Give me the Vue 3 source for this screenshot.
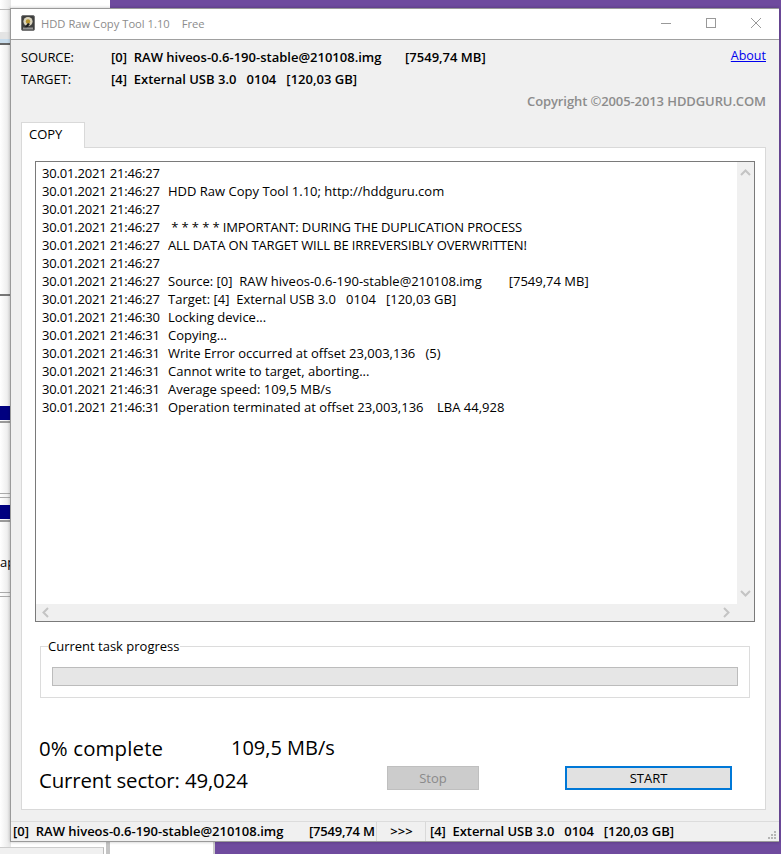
<script setup>
const t1 = '30.01.2021 21:46:27'
const t2 = '30.01.2021 21:46:30'
const t3 = '30.01.2021 21:46:31'
const log = [
  [t1, ''],
  [t1, 'HDD Raw Copy Tool 1.10; http://hddguru.com'],
  [t1, ''],
  [t1, ' * * * * * IMPORTANT: DURING THE DUPLICATION PROCESS', true],
  [t1, 'ALL DATA ON TARGET WILL BE IRREVERSIBLY OVERWRITTEN!', true],
  [t1, ''],
  [t1, 'Source: [0]  RAW hiveos-0.6-190-stable@210108.img        [7549,74 MB]'],
  [t1, 'Target: [4]  External USB 3.0   0104   [120,03 GB]'],
  [t2, 'Locking device...'],
  [t3, 'Copying...'],
  [t3, 'Write Error occurred at offset 23,003,136   (5)'],
  [t3, 'Cannot write to target, aborting...'],
  [t3, 'Average speed: 109,5 MB/s'],
  [t3, 'Operation terminated at offset 23,003,136    LBA 44,928']
]
const srcName = '[0]  RAW hiveos-0.6-190-stable@210108.img'
const srcFull = srcName + '       [7549,74 MB]'
const tgtFull = '[4]  External USB 3.0   0104   [120,03 GB]'
</script>

<template>
  <div class="desktop">
    <div class="wall-top"></div>
    <div class="wall-right"></div>
    <div class="wall-bottom"></div>
    <div class="bg-window">
      <div class="bg-line" style="top: 9px; height: 1px; background: #bbb"></div>
      <div class="bg-line" style="top: 32px; height: 7px; background: #e4e4e4"></div>
      <div class="bg-line" style="top: 39px; height: 4px; background: #c8dcec"></div>
      <div class="bg-line" style="top: 43px; height: 2px; background: #666"></div>
      <div class="bg-line" style="top: 294px; height: 2px; background: #777"></div>
      <div class="bg-line" style="top: 406px; height: 14px; background: #000080"></div>
      <div class="bg-line" style="top: 421px; height: 2px; background: #999"></div>
      <div class="bg-line" style="top: 493px; height: 1px; background: #aaa"></div>
      <div class="bg-line" style="top: 497px; height: 1px; background: #aaa"></div>
      <div class="bg-line" style="top: 505px; height: 14px; background: #000080"></div>
      <div class="bg-line" style="top: 520px; height: 2px; background: #999"></div>
      <div class="bg-line" style="top: 592px; height: 1px; background: #aaa"></div>
      <div class="bg-line" style="top: 596px; height: 1px; background: #aaa"></div>
      <span class="bg-text">ap</span>
    </div>
    <div class="bottom-left"></div>
    <div class="bottom-white"></div>

    <section class="window">
      <header class="titlebar">
        <svg class="app-icon" width="14" height="16" viewBox="0 0 14 16">
          <rect x="0.5" y="0.5" width="13" height="15" rx="1.5" fill="#3f3f3f" stroke="#777" />
          <circle cx="7" cy="6.5" r="4.6" fill="#d9d3bd" />
          <circle cx="7" cy="6.5" r="2.2" fill="#b8952f" />
          <path d="M7 8 L3 13 L5 14 L9 9 Z" fill="#1d1d1d" />
          <rect x="2" y="12.5" width="10" height="2" fill="#bdbdbd" opacity="0.7" />
        </svg>
        <span class="title">HDD Raw Copy Tool 1.10</span>
        <span class="free">Free</span>
        <div class="controls">
          <svg width="12" height="12" viewBox="0 0 12 12"><path d="M1 6.5H11" stroke="#999" fill="none" /></svg>
          <svg width="12" height="12" viewBox="0 0 12 12"><rect x="1.5" y="1.5" width="9" height="9" stroke="#999" fill="none" /></svg>
          <svg width="12" height="12" viewBox="0 0 12 12"><path d="M1 1L11 11M11 1L1 11" stroke="#999" fill="none" /></svg>
        </div>
      </header>

      <div class="body">
        <div class="info">
          <div class="info-rows">
            <div class="info-row">
              <span class="info-label">SOURCE:</span>
              <span class="info-value">{{ srcFull }}</span>
            </div>
            <div class="info-row">
              <span class="info-label">TARGET:</span>
              <span class="info-value">{{ tgtFull }}</span>
            </div>
          </div>
          <a class="about">About</a>
        </div>
        <div class="copyright">Copyright ©2005-2013 HDDGURU.COM</div>

        <div class="tabs"><div class="tab">COPY</div></div>
        <div class="tab-panel">
          <div class="log">
            <div class="log-main">
              <div class="log-lines">
                <div v-for="(row, i) in log" :key="i" class="log-row">
                  <span class="log-time">{{ row[0] }}</span>
                  <span class="log-msg" :class="{ caps: row[2] }">{{ row[1] }}</span>
                </div>
              </div>
              <div class="vscroll">
                <svg width="11" height="7" viewBox="0 0 11 7"><path d="M1 6L5.5 1.5L10 6" stroke="#c4c4c4" stroke-width="2" fill="none" /></svg>
                <svg width="11" height="7" viewBox="0 0 11 7"><path d="M1 1L5.5 5.5L10 1" stroke="#c4c4c4" stroke-width="2" fill="none" /></svg>
              </div>
            </div>
            <div class="hscroll">
              <svg width="7" height="11" viewBox="0 0 7 11"><path d="M6 1L1.5 5.5L6 10" stroke="#c4c4c4" stroke-width="2" fill="none" /></svg>
              <svg width="7" height="11" viewBox="0 0 7 11"><path d="M1 1L5.5 5.5L1 10" stroke="#c4c4c4" stroke-width="2" fill="none" /></svg>
            </div>
          </div>

          <fieldset class="group">
            <legend>Current task progress</legend>
            <div class="progress"></div>
          </fieldset>

          <div class="footer">
            <div class="stats">
              <div class="stat-row"><span class="stat-pct">0% complete</span><span class="stat-speed">109,5 MB/s</span></div>
              <div class="stat-row stat-sector">Current sector: 49,024</div>
            </div>
            <button class="btn stop" disabled>Stop</button>
            <button class="btn start">START</button>
          </div>
        </div>
      </div>

      <footer class="status">
        <span class="st st-src">{{ srcName }}</span>
        <span class="st st-size">[7549,74 M</span>
        <span class="st st-arrow">&gt;&gt;&gt;</span>
        <span class="st st-tgt">{{ tgtFull }}</span>
        <svg class="grip" width="9" height="9" viewBox="0 0 9 9" fill="#b5b5b5">
          <rect x="6" y="0" width="2" height="2" /><rect x="3" y="3" width="2" height="2" /><rect x="6" y="3" width="2" height="2" />
          <rect x="0" y="6" width="2" height="2" /><rect x="3" y="6" width="2" height="2" /><rect x="6" y="6" width="2" height="2" />
        </svg>
      </footer>
    </section>
  </div>
</template>

<style scoped>
.desktop {
  position: relative;
  width: 781px;
  height: 854px;
  overflow: hidden;
  background: #fff;
  font-family: "Open Sans", "Noto Sans", sans-serif;
  font-size: 13px;
  color: #000;
}
.wall-top { position: absolute; left: 110px; top: 0; right: 0; height: 9px; background: #6f4b9e; }
.wall-right { position: absolute; right: 0; top: 0; bottom: 0; width: 2px; background: #6f4b9e; }
.wall-bottom { position: absolute; left: 215px; right: 0; bottom: 0; height: 12px; background: #6f4b9e; }
.bg-window {
  position: absolute;
  left: 0;
  top: 0;
  width: 11px;
  height: 854px;
  background: linear-gradient(90deg, #fff, #e6e6e6);
}
.bg-line { position: absolute; left: 0; right: 0; }
.bg-text { position: absolute; left: 0; top: 553px; font-size: 13px; width: 11px; overflow: hidden; }
.bottom-left {
  position: absolute;
  left: 0;
  bottom: 0;
  width: 103px;
  height: 6px;
  background: #f0f0f0;
  border-top: 1px solid #ccc;
  border-right: 1px solid #bbb;
}
.bottom-white {
  position: absolute;
  left: 106px;
  bottom: 0;
  width: 109px;
  height: 12px;
  background: linear-gradient(90deg, #c4c4c4 0 4px, #fff 4px 107px, #ccc 107px);
}

.window {
  position: absolute;
  left: 10px;
  top: 8px;
  width: 769px;
  height: 834px;
  box-sizing: border-box;
  border: 1px solid #9a9a9a;
  border-width: 1px 0 1px 1px;
  background: #f0f0f0;
  display: flex;
  flex-direction: column;
  box-shadow: 0 0 3px rgba(0, 0, 0, 0.25);
}
.titlebar {
  height: 31px;
  flex: none;
  box-sizing: border-box;
  background: #fff;
  border-bottom: 1px solid #a0a0a0;
  display: flex;
  align-items: center;
  padding: 0 0 2px 10px;
  color: #8c8c8c;
  font-size: 11.2px;
}
.app-icon { margin-right: 6px; }
.free { margin-left: 12px; }
.controls {
  margin-left: auto;
  display: flex;
  gap: 33px;
  padding-right: 17px;
}
.body { flex: 1; min-height: 0; padding: 0 13px 0 10px; display: flex; flex-direction: column; }
.info { display: flex; justify-content: space-between; padding-top: 6px; height: 48px; box-sizing: border-box; }
.info-row { display: flex; height: 22px; align-items: center; }
.info-label { width: 90px; letter-spacing: -0.1px; }
.info-value { font-weight: 600; white-space: pre; }
.about { color: #0000ee; text-decoration: underline; line-height: 18px; height: 18px; font-size: 12.5px; margin-top: 1px; }
.copyright {
  text-align: right;
  font-weight: 600;
  color: #8c8c8c;
  line-height: 18px;
  height: 18px;
  margin-top: 4px;
  letter-spacing: -0.1px;
}
.tabs { margin-top: 12px; height: 26px; display: flex; position: relative; z-index: 1; }
.tab {
  width: 64px;
  height: 26px;
  box-sizing: border-box;
  border: 1px solid #d9d9d9;
  border-bottom: 0;
  background: #fff;
  line-height: 23px;
  padding-left: 7px;
}
.tab-panel {
  height: 663px;
  box-sizing: border-box;
  border: 1px solid #d9d9d9;
  background: #fff;
  margin-top: -1px;
  padding: 13px 10px 0 13px;
}
.log {
  height: 461px;
  box-sizing: border-box;
  border: 1px solid #7a7a7a;
  display: flex;
  flex-direction: column;
}
.log-main { flex: 1; min-height: 0; display: flex; }
.log-lines { flex: 1; padding: 2px 0 0 6px; }
.log-row { display: flex; height: 18px; line-height: 18px; white-space: pre; }
.log-time { width: 126px; flex: none; letter-spacing: -0.18px; }
.caps { letter-spacing: -0.12px; }
.vscroll {
  width: 17px;
  background: #f0f0f0;
  display: flex;
  flex-direction: column;
  justify-content: space-between;
  align-items: center;
  padding: 7px 0;
  box-sizing: border-box;
}
.hscroll {
  height: 17px;
  flex: none;
  background: #f0f0f0;
  display: flex;
  justify-content: space-between;
  align-items: center;
  padding: 0 24px 0 6px;
}
.group {
  margin: 15px 5px 0 5px;
  height: 61px;
  box-sizing: border-box;
  border: 1px solid #dcdcdc;
  padding: 12px 11px 0;
  min-width: 0;
}
.group legend { padding: 0 1px 0 0; margin-left: -4px; line-height: 18px; }
.progress { height: 19px; box-sizing: border-box; background: #e6e6e6; border: 1px solid #bcbcbc; }
.footer { margin-top: 34px; display: flex; align-items: flex-end; }
.stats { width: 348px; font-size: 20.4px; margin-left: 4px; }
.stat-row { height: 32px; line-height: 32px; white-space: pre; display: flex; }
.stat-pct { width: 192px; letter-spacing: 0.15px; }
.stat-speed { font-size: 20px; }
.stat-sector { letter-spacing: -0.13px; }
.btn {
  height: 24px;
  box-sizing: border-box;
  font-family: inherit;
  font-size: 13px;
  padding: 0;
  margin-bottom: 6px;
}
.stop { width: 92px; background: #cccccc; border: 1px solid #bfbfbf; color: #8a8a8a; }
.start { width: 167px; margin-left: 86px; background: #e1e1e1; border: 2px solid #0078d7; color: #000; }
.status {
  height: 20px;
  flex: none;
  box-sizing: border-box;
  border-top: 1px solid #dcdcdc;
  display: flex;
  align-items: center;
  position: relative;
  font-weight: 600;
  padding-left: 2px;
  white-space: pre;
}
.st { height: 100%; line-height: 19px; }
.st-src { width: 296px; }
.st-size { width: 67px; border-right: 1px solid #d9d9d9; overflow: hidden; letter-spacing: -0.2px; }
.st-arrow { width: 49px; text-align: center; border-right: 1px solid #d9d9d9; padding-left: 1px; box-sizing: border-box; }
.st-tgt { padding-left: 4px; letter-spacing: -0.05px; }
.grip { position: absolute; right: 2px; bottom: 1px; }
</style>

<style>
html, body { margin: 0; padding: 0; background: #fff; }
</style>
